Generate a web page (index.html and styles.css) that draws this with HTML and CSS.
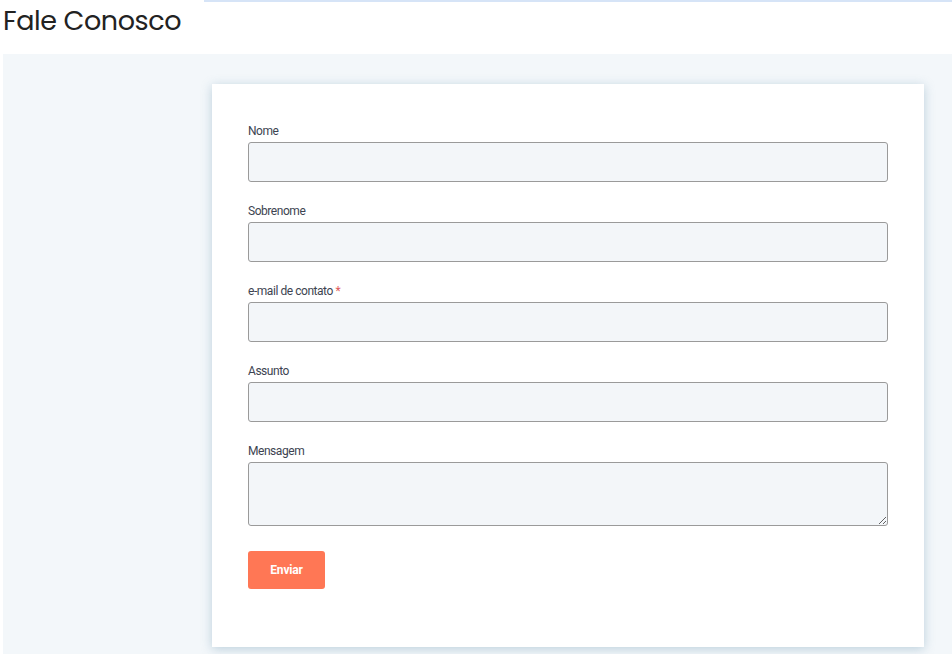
FILE: index.html
```html
<!DOCTYPE html>
<html lang="pt">
<head>
<meta charset="utf-8">
<link rel="stylesheet" href="styles.css">
</head>
<body>
<div class="topline"></div>
<div class="page">
  <h1 class="title">Fale Conosco</h1>
  <section class="section">
    <form class="card">
      <div class="field">
        <label class="label">Nome</label>
        <input class="input" type="text">
      </div>
      <div class="field">
        <label class="label">Sobrenome</label>
        <input class="input" type="text">
      </div>
      <div class="field">
        <label class="label">e-mail de contato <span class="req">*</span></label>
        <input class="input" type="email">
      </div>
      <div class="field">
        <label class="label">Assunto</label>
        <input class="input" type="text">
      </div>
      <div class="field">
        <label class="label">Mensagem</label>
        <textarea class="textarea"></textarea>
      </div>
      <button class="button" type="button">Enviar</button>
    </form>
  </section>
</div>
</body>
</html>
```
FILE: styles.css
```css
html, body {
  margin: 0;
  padding: 0;
  background: #ffffff;
  height: 100%;
  overflow: hidden;
}
.topline {
  height: 2px;
  margin-left: 204px;
  background: #d6e4f7;
}
.page {
  padding-left: 3px;
}
.title {
  margin: 0;
  height: 52px;
  font-family: "Poppins", "Inter", "Noto Sans", sans-serif;
  font-weight: 400;
  font-size: 27px;
  line-height: 38px;
  color: #222222;
  letter-spacing: -0.4px;
}
.section {
  background: #f3f7fa;
  padding: 30px 28px 30px 209px;
  min-height: 600px;
  box-sizing: border-box;
}
.card {
  background: #ffffff;
  box-shadow: 0 2px 10px rgba(120, 160, 185, 0.45);
  padding: 40px 36px 58px 36px;
  display: flex;
  flex-direction: column;
  gap: 22px;
}
.field {
  display: flex;
  flex-direction: column;
  gap: 3px;
}
.label {
  font-family: "Roboto", "Liberation Sans", sans-serif;
  font-size: 12px;
  line-height: 15px;
  color: #3d4451;
  letter-spacing: -0.45px;
}
.req {
  color: #e05a5a;
}
.input, .textarea {
  box-sizing: border-box;
  width: 100%;
  height: 40px;
  border: 1px solid #9a9a9a;
  border-radius: 3px;
  background: #f3f6f9;
  margin: 0;
  font-family: "Roboto", sans-serif;
  font-size: 13px;
}
.textarea {
  height: 64px;
  resize: vertical;
  display: block;
}
.button {
  align-self: flex-start;
  width: 77px;
  height: 38px;
  margin-top: 3px;
  border: none;
  border-radius: 3px;
  background: #ff7755;
  color: #ffffff;
  font-family: "Roboto", "Liberation Sans", sans-serif;
  font-weight: 700;
  font-size: 12px;
  letter-spacing: -0.2px;
}
```
